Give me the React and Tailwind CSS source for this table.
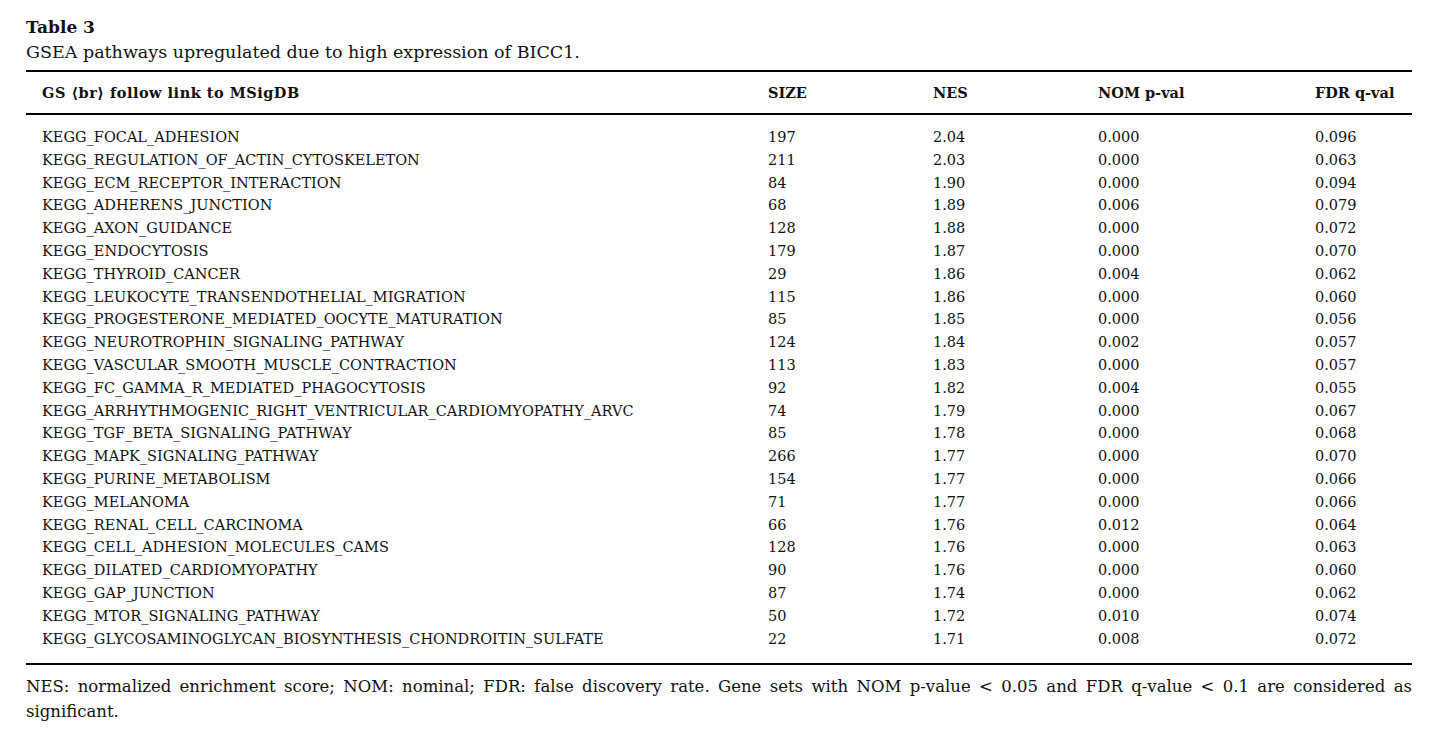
import React from 'react'

const rows = [
  ['KEGG_FOCAL_ADHESION', '197', '2.04', '0.000', '0.096'],
  ['KEGG_REGULATION_OF_ACTIN_CYTOSKELETON', '211', '2.03', '0.000', '0.063'],
  ['KEGG_ECM_RECEPTOR_INTERACTION', '84', '1.90', '0.000', '0.094'],
  ['KEGG_ADHERENS_JUNCTION', '68', '1.89', '0.006', '0.079'],
  ['KEGG_AXON_GUIDANCE', '128', '1.88', '0.000', '0.072'],
  ['KEGG_ENDOCYTOSIS', '179', '1.87', '0.000', '0.070'],
  ['KEGG_THYROID_CANCER', '29', '1.86', '0.004', '0.062'],
  ['KEGG_LEUKOCYTE_TRANSENDOTHELIAL_MIGRATION', '115', '1.86', '0.000', '0.060'],
  ['KEGG_PROGESTERONE_MEDIATED_OOCYTE_MATURATION', '85', '1.85', '0.000', '0.056'],
  ['KEGG_NEUROTROPHIN_SIGNALING_PATHWAY', '124', '1.84', '0.002', '0.057'],
  ['KEGG_VASCULAR_SMOOTH_MUSCLE_CONTRACTION', '113', '1.83', '0.000', '0.057'],
  ['KEGG_FC_GAMMA_R_MEDIATED_PHAGOCYTOSIS', '92', '1.82', '0.004', '0.055'],
  ['KEGG_ARRHYTHMOGENIC_RIGHT_VENTRICULAR_CARDIOMYOPATHY_ARVC', '74', '1.79', '0.000', '0.067'],
  ['KEGG_TGF_BETA_SIGNALING_PATHWAY', '85', '1.78', '0.000', '0.068'],
  ['KEGG_MAPK_SIGNALING_PATHWAY', '266', '1.77', '0.000', '0.070'],
  ['KEGG_PURINE_METABOLISM', '154', '1.77', '0.000', '0.066'],
  ['KEGG_MELANOMA', '71', '1.77', '0.000', '0.066'],
  ['KEGG_RENAL_CELL_CARCINOMA', '66', '1.76', '0.012', '0.064'],
  ['KEGG_CELL_ADHESION_MOLECULES_CAMS', '128', '1.76', '0.000', '0.063'],
  ['KEGG_DILATED_CARDIOMYOPATHY', '90', '1.76', '0.000', '0.060'],
  ['KEGG_GAP_JUNCTION', '87', '1.74', '0.000', '0.062'],
  ['KEGG_MTOR_SIGNALING_PATHWAY', '50', '1.72', '0.010', '0.074'],
  ['KEGG_GLYCOSAMINOGLYCAN_BIOSYNTHESIS_CHONDROITIN_SULFATE', '22', '1.71', '0.008', '0.072'],
]

const cols = 'grid grid-cols-[726px_165px_165px_217px_1fr] pl-4'

const App = () => {
  return (
    <div className="min-h-screen bg-white text-[#111] font-['DejaVu_Serif',serif]">
      <div className="ml-[26px] w-[1386px] pt-[15px]">
        {/* Caption */}
        <div className="text-[17px] leading-[25px] font-bold">Table 3</div>
        <div className="text-[17.5px] leading-[25px]">
          GSEA pathways upregulated due to high expression of BICC1.
        </div>

        {/* Table */}
        <div className="mt-[5px] border-t-2 border-b-2 border-black">
          <div className={`${cols} h-[41px] items-center text-[14.5px] font-bold`}>
            <div className="tracking-[0.5px]">GS ⟨br⟩ follow link to MSigDB</div>
            <div>SIZE</div>
            <div>NES</div>
            <div>NOM p-val</div>
            <div>FDR q-val</div>
          </div>
        </div>
        <div className="pt-[11px] pb-[13px] border-b-2 border-black">
          {rows.map((r) => (
            <div key={r[0]} className={`${cols} text-[14.5px] leading-[22.8px]`}>
              {r.map((c, i) => (
                <div key={i}>{c}</div>
              ))}
            </div>
          ))}
        </div>

        {/* Footnote */}
        <div className="pt-[9px] text-[16.5px] leading-[25px]">
          <p className="text-justify [text-align-last:justify]">
            NES: normalized enrichment score; NOM: nominal; FDR: false discovery rate. Gene sets with NOM p-value &lt; 0.05 and FDR q-value &lt; 0.1 are considered as
          </p>
          <p>significant.</p>
        </div>
      </div>
    </div>
  )
}

export default App
